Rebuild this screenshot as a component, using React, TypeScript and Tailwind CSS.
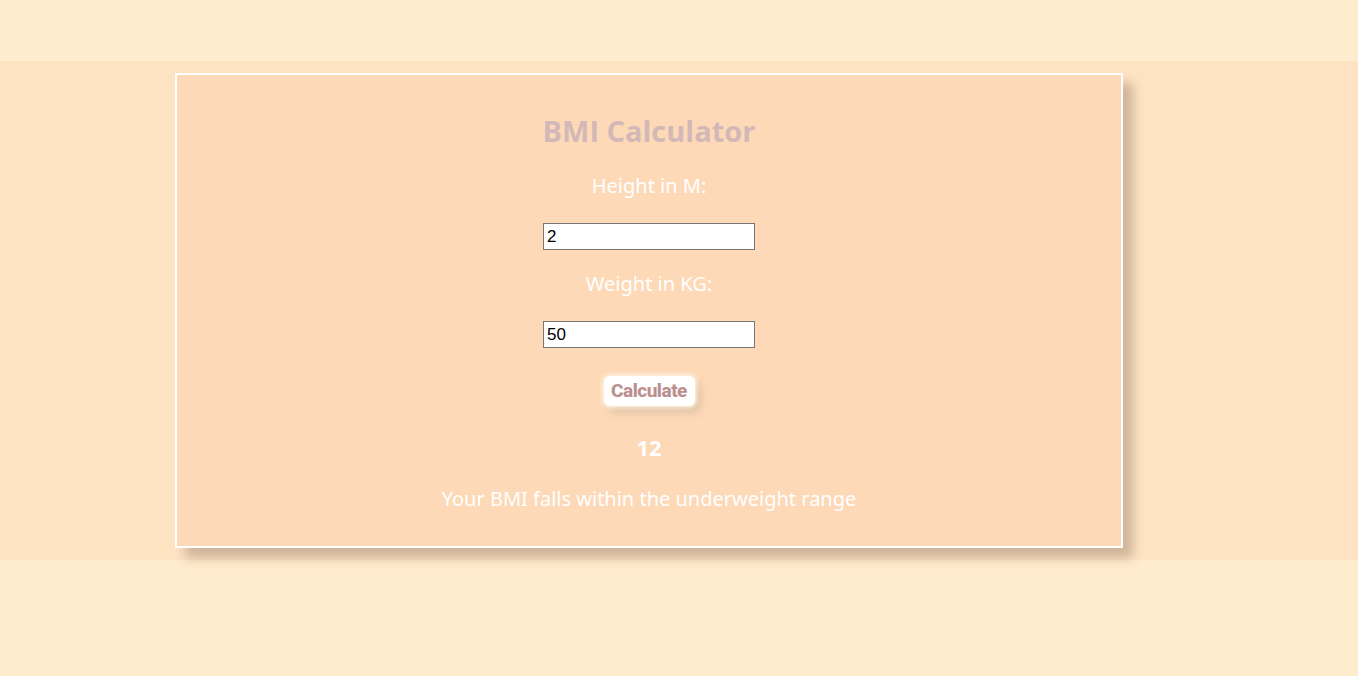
import React from "react";

export default function App() {
  return (
    <div className="min-h-[676px] w-full bg-[#ffebcd] pt-[61px]">
      <div className="h-[499px] w-full bg-[#fee3c3] pt-[12px]">
        <div className="ml-[175px] flex h-[475px] w-[948px] flex-col items-center border-2 border-white bg-[#fdd9b7] shadow-[10px_10px_10px_#cfb59a] font-['Comic_Sans_MS','Noto_Sans',sans-serif]">
          <h1 className="mt-[36px] font-['Open_Sans','Noto_Sans',sans-serif] text-[29px] font-bold leading-[40px] text-[#d3b8b8]">
            BMI Calculator
          </h1>
          <label className="mt-[21px] text-[20px] leading-[28px] text-white">
            Height in M:
          </label>
          <input
            readOnly
            value="2"
            className="mt-[23px] h-[27px] w-[212px] border border-[#767676] bg-white px-[3px] font-['Liberation_Sans',Arial,sans-serif] text-[17px] text-black outline-none"
          />
          <label className="mt-[20px] text-[20px] leading-[28px] text-white">
            Weight in KG:
          </label>
          <input
            readOnly
            value="50"
            className="mt-[23px] h-[27px] w-[212px] border border-[#767676] bg-white px-[3px] font-['Liberation_Sans',Arial,sans-serif] text-[17px] text-black outline-none"
          />
          <button className="mt-[28px] h-[30px] w-[91px] rounded-[6px] bg-white font-['Impact','Liberation_Sans_Narrow','Roboto',sans-serif] text-[19px] font-extrabold leading-[30px] tracking-[-0.5px] text-[#bc8f8f] shadow-[0_0_4px_2px_#fff3e0,5px_6px_8px_#d9bc9f] [text-shadow:1px_1px_0_#ffffff]">
            Calculate
          </button>
          <div className="mt-[26px] text-[22px] font-bold leading-[30px] text-white">
            12
          </div>
          <p className="mt-[23px] text-[20px] leading-[28px] text-white">
            Your BMI falls within the underweight range
          </p>
        </div>
      </div>
    </div>
  );
}
